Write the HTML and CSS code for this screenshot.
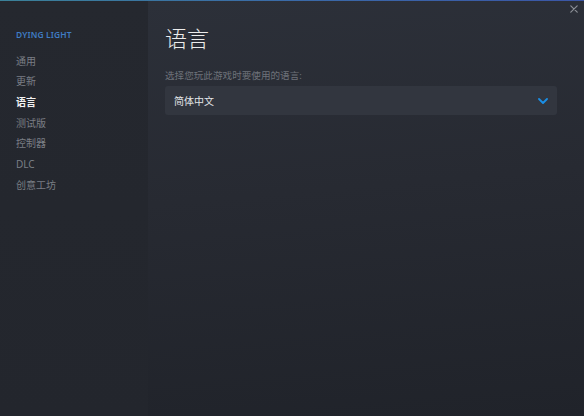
FILE: index.html
```html
<!DOCTYPE html>
<html lang="zh-CN">
<head>
<meta charset="utf-8">
<title>语言</title>
<link rel="stylesheet" href="styles.css">
</head>
<body>
<div class="window">
  <div class="accent"></div>
  <div class="layout">
    <nav class="sidebar">
      <div class="game-title">DYING LIGHT</div>
      <ul class="nav">
        <li class="nav-item">通用</li>
        <li class="nav-item">更新</li>
        <li class="nav-item active">语言</li>
        <li class="nav-item">测试版</li>
        <li class="nav-item">控制器</li>
        <li class="nav-item">DLC</li>
        <li class="nav-item">创意工坊</li>
      </ul>
    </nav>
    <main class="content">
      <h1 class="page-title">语言</h1>
      <div class="field-label">选择您玩此游戏时要使用的语言:</div>
      <div class="dropdown">
        <span class="dropdown-value">简体中文</span>
        <svg class="chevron" width="10" height="6" viewBox="0 0 10 6"><path d="M1 1 L5 5 L9 1" fill="none" stroke="#1a8fe6" stroke-width="1.8" stroke-linecap="round" stroke-linejoin="round"/></svg>
      </div>
    </main>
  </div>
  <svg class="close" width="8" height="8" viewBox="0 0 8 8"><path d="M0.8 0.8 L7.2 7.2 M7.2 0.8 L0.8 7.2" stroke="#8b8f96" stroke-width="1.2" stroke-linecap="round"/></svg>
</div>
</body>
</html>
```
FILE: styles.css
```css
html, body {
  margin: 0;
  padding: 0;
  width: 584px;
  height: 416px;
  overflow: hidden;
  background: #24272e;
  font-family: "Noto Sans", "Noto Sans CJK SC", sans-serif;
}
.window {
  position: relative;
  width: 584px;
  height: 416px;
  display: flex;
  flex-direction: column;
}
.accent {
  height: 1px;
  flex: none;
  background: linear-gradient(90deg, #3b8199 0%, #3a6aa8 50%, #3b56a6 100%);
}
.layout {
  flex: 1;
  display: flex;
}
.sidebar {
  width: 132px;
  flex: none;
  padding: 28px 0 0 16px;
  background: linear-gradient(180deg, #25282f 0%, #23262d 100%);
}
.game-title {
  font-size: 8.4px;
  line-height: 12px;
  font-weight: 600;
  color: #3f7cc4;
  letter-spacing: 0.15px;
}
.nav {
  list-style: none;
  margin: 9.5px 0 0;
  padding: 0;
}
.nav-item {
  font-size: 10px;
  line-height: 20.7px;
  color: #7a7e85;
}
.nav-item.active {
  color: #f2f2f2;
  font-weight: 700;
}
.content {
  flex: 1;
  padding: 25px 27px 0 17px;
  background: linear-gradient(175deg, #2c3039 0%, #272a32 45%, #20232a 100%);
}
.page-title {
  margin: 0;
  font-size: 22px;
  line-height: 24px;
  font-weight: 300;
  color: #ececec;
}
.field-label {
  margin-top: 20px;
  font-size: 9.6px;
  line-height: 12px;
  color: #6e727a;
}
.dropdown {
  margin-top: 4px;
  height: 29px;
  border-radius: 3px;
  background: #32363f;
  display: flex;
  align-items: center;
  justify-content: space-between;
  padding: 0 9px 0 9px;
}
.dropdown-value {
  font-size: 10px;
  color: #e2e5e8;
}
.chevron {
  display: block;
}
.close {
  position: absolute;
  top: 5px;
  left: 570px;
}
```
